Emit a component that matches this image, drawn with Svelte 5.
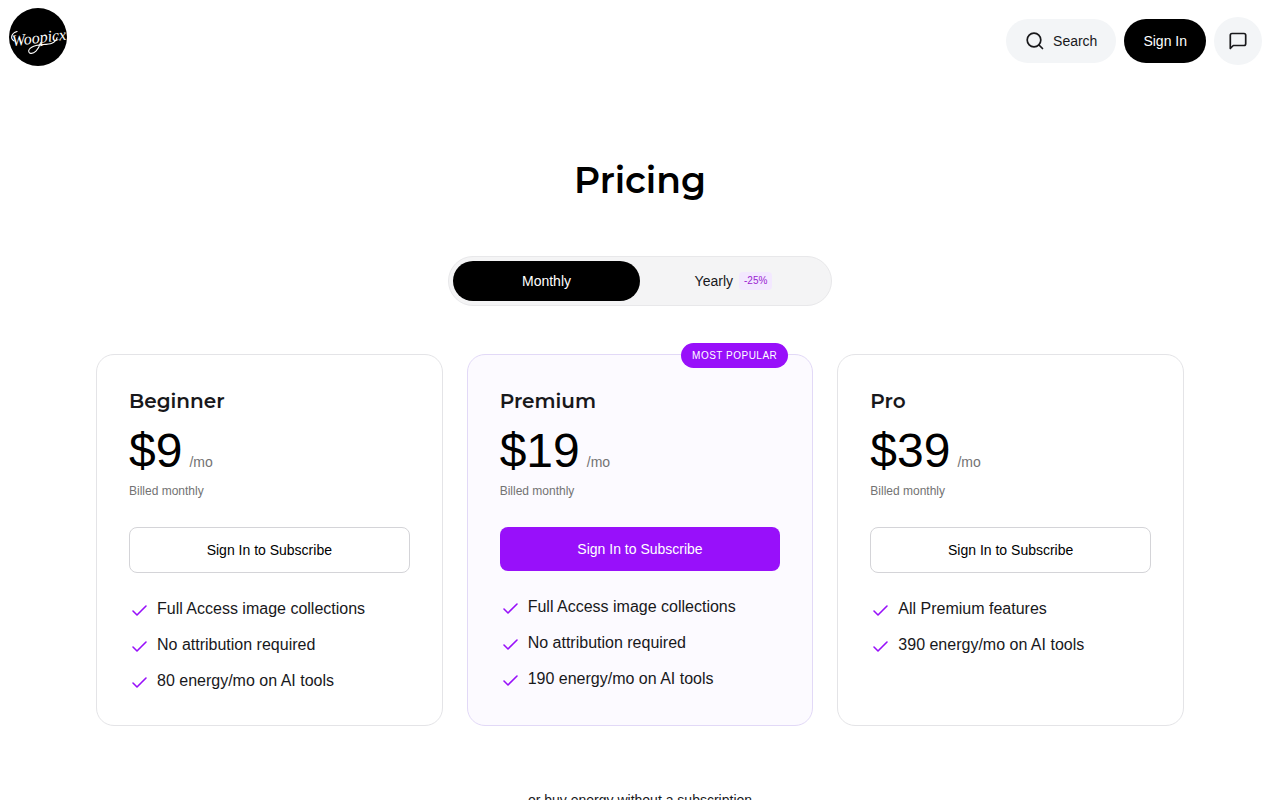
<script lang="ts">
	type Plan = {
		name: string;
		monthly: number;
		popular?: boolean;
		features: string[];
	};

	const plans: Plan[] = [
		{
			name: 'Beginner',
			monthly: 9,
			features: ['Full Access image collections', 'No attribution required', '80 energy/mo on AI tools']
		},
		{
			name: 'Premium',
			monthly: 19,
			popular: true,
			features: ['Full Access image collections', 'No attribution required', '190 energy/mo on AI tools']
		},
		{
			name: 'Pro',
			monthly: 39,
			features: ['All Premium features', '390 energy/mo on AI tools']
		}
	];

	let yearly = $state(false);

	// yearly billing takes 25% off
	function price(plan: Plan) {
		return yearly ? Math.round(plan.monthly * 0.75) : plan.monthly;
	}
</script>

<header>
	<a class="logo" href="/" aria-label="Woopicx">
		<svg viewBox="0 0 58 58" width="58" height="58">
			<circle cx="29" cy="29" r="29" fill="#000" />
			<g transform="rotate(-7 29 30)">
				<text x="30" y="35" text-anchor="middle" class="logo-text">Woopicx</text>
				<path d="M31 35c-3 7-8 11-12 9-3-3 2-7 10-7 8 0 16 2 19-5" />
				<path d="M5 30c-4-3-2-8 4-9" />
			</g>
		</svg>
	</a>
	<nav class="actions">
		<button class="pill search">
			<svg viewBox="0 0 20 20" width="20" height="20" fill="none" stroke="currentColor" stroke-width="1.7" stroke-linecap="round">
				<circle cx="9" cy="9" r="6.8" />
				<path d="M14 14l3.5 3.5" />
			</svg>
			Search
		</button>
		<button class="pill sign-in">Sign In</button>
		<button class="chat" aria-label="Messages">
			<svg viewBox="0 0 20 20" width="20" height="20" fill="none" stroke="currentColor" stroke-width="1.7" stroke-linejoin="round">
				<path d="M2.3 17.5V4.2A1.7 1.7 0 0 1 4 2.5h12a1.7 1.7 0 0 1 1.7 1.7v8.6a1.7 1.7 0 0 1-1.7 1.7H5.3z" />
			</svg>
		</button>
	</nav>
</header>

<main>
	<h1>Pricing</h1>

	<div class="toggle">
		<button class:active={!yearly} aria-pressed={!yearly} onclick={() => (yearly = false)}>Monthly</button>
		<button class:active={yearly} aria-pressed={yearly} onclick={() => (yearly = true)}>
			Yearly <span class="discount">-25%</span>
		</button>
	</div>

	<div class="plans">
		{#each plans as plan}
			<section class="card" class:popular={plan.popular}>
				{#if plan.popular}
					<span class="badge">MOST POPULAR</span>
				{/if}
				<h2>{plan.name}</h2>
				<div class="price">
					<span class="amount">${price(plan)}</span>
					<span class="period">/mo</span>
				</div>
				<p class="billed">Billed {yearly ? 'yearly' : 'monthly'}</p>
				<button class="subscribe">Sign In to Subscribe</button>
				<ul>
					{#each plan.features as feature}
						<li>
							<svg viewBox="0 0 20 20" width="20" height="20" fill="none" stroke="#9810fa" stroke-width="1.6" stroke-linecap="round" stroke-linejoin="round">
								<path d="M4 12l4 4 9-9" />
							</svg>
							{feature}
						</li>
					{/each}
				</ul>
			</section>
		{/each}
	</div>

	<p class="energy">or buy energy without a subscription</p>
</main>

<style>
	:global(body) {
		margin: 0;
		background: #fff;
		color: #18181b;
		font-family: 'Liberation Sans', Arial, sans-serif;
	}
	button {
		border: 0;
		margin: 0;
		padding: 0;
		color: inherit;
		font: inherit;
		font-size: 14px;
		line-height: 20px;
		cursor: pointer;
	}
	svg { display: block; flex: none; }

	header {
		display: flex;
		justify-content: space-between;
		align-items: flex-start;
		padding: 8px 18px 0 9px;
	}
	.logo-text {
		fill: #fff;
		font: italic 16px 'Liberation Serif', serif;
	}
	.logo path {
		fill: none;
		stroke: #fff;
		stroke-width: 1.1;
		stroke-linecap: round;
	}
	.actions {
		display: flex;
		align-items: center;
		gap: 8px;
		padding-top: 9px;
	}
	.pill {
		display: flex;
		align-items: center;
		gap: 8px;
		height: 44px;
		padding: 0 19px;
		border-radius: 22px;
	}
	.search, .chat { background: #f3f5f7; }
	.sign-in { background: #000; color: #fff; }
	.chat {
		display: grid;
		place-items: center;
		width: 48px;
		height: 48px;
		border-radius: 50%;
	}

	main {
		display: flex;
		flex-direction: column;
		align-items: center;
		max-width: 1088px;
		margin: 0 auto;
		padding: 92px 24px 64px;
	}
	h1, h2 {
		font-family: Montserrat, Inter, sans-serif;
		font-weight: 600;
	}
	h1 {
		margin: 0 0 54px;
		color: #000;
		font-size: 36px;
		line-height: 44px;
	}
	.toggle {
		display: grid;
		grid-template-columns: 1fr 1fr;
		box-sizing: border-box;
		width: 384px;
		max-width: 100%;
		padding: 4px;
		border: 1px solid #e8e8ea;
		border-radius: 25px;
		background: #f4f4f5;
	}
	.toggle button {
		display: flex;
		justify-content: center;
		align-items: center;
		gap: 6px;
		height: 40px;
		border-radius: 20px;
		background: none;
	}
	.toggle .active { background: #000; color: #fff; }
	.discount {
		padding: 1px 5px;
		border-radius: 4px;
		background: #f3e8ff;
		color: #9a1fd0;
		font-size: 10px;
		line-height: 16px;
	}

	.plans {
		display: grid;
		grid-template-columns: repeat(auto-fit, minmax(300px, 1fr));
		gap: 24px;
		width: 100%;
		margin-top: 48px;
	}
	.card {
		position: relative;
		padding: 32px;
		border: 1px solid #e4e4e7;
		border-radius: 18px;
	}
	.popular { border-color: #e2d9f7; background: #fcfaff; }
	.badge {
		position: absolute;
		top: -12px;
		right: 24px;
		padding: 0 11px;
		border-radius: 13px;
		background: #9810fa;
		color: #fff;
		font-size: 10px;
		line-height: 25px;
		letter-spacing: 0.5px;
	}
	h2 {
		margin: 0 0 12px;
		font-size: 20px;
		line-height: 28px;
	}
	.price {
		display: flex;
		align-items: baseline;
		gap: 7px;
		height: 48px;
	}
	.amount { color: #000; font-size: 48px; line-height: 48px; }
	.period { color: #737373; font-size: 14px; }
	.billed {
		margin: 8px 0 28px;
		color: #737373;
		font-size: 12px;
		line-height: 16px;
	}
	.subscribe {
		width: 100%;
		padding: 12px;
		border: 1px solid #d4d4d8;
		border-radius: 8px;
		background: #fff;
		color: #000;
	}
	.popular .subscribe { border: 0; background: #9810fa; color: #fff; }
	ul {
		display: grid;
		gap: 12px;
		margin: 24px 0 0;
		padding: 0;
		list-style: none;
	}
	li {
		display: flex;
		align-items: center;
		gap: 8px;
		font-size: 16px;
		line-height: 24px;
	}
	.energy {
		margin: 64px 0 0;
		font-size: 14px;
		line-height: 20px;
	}
</style>
